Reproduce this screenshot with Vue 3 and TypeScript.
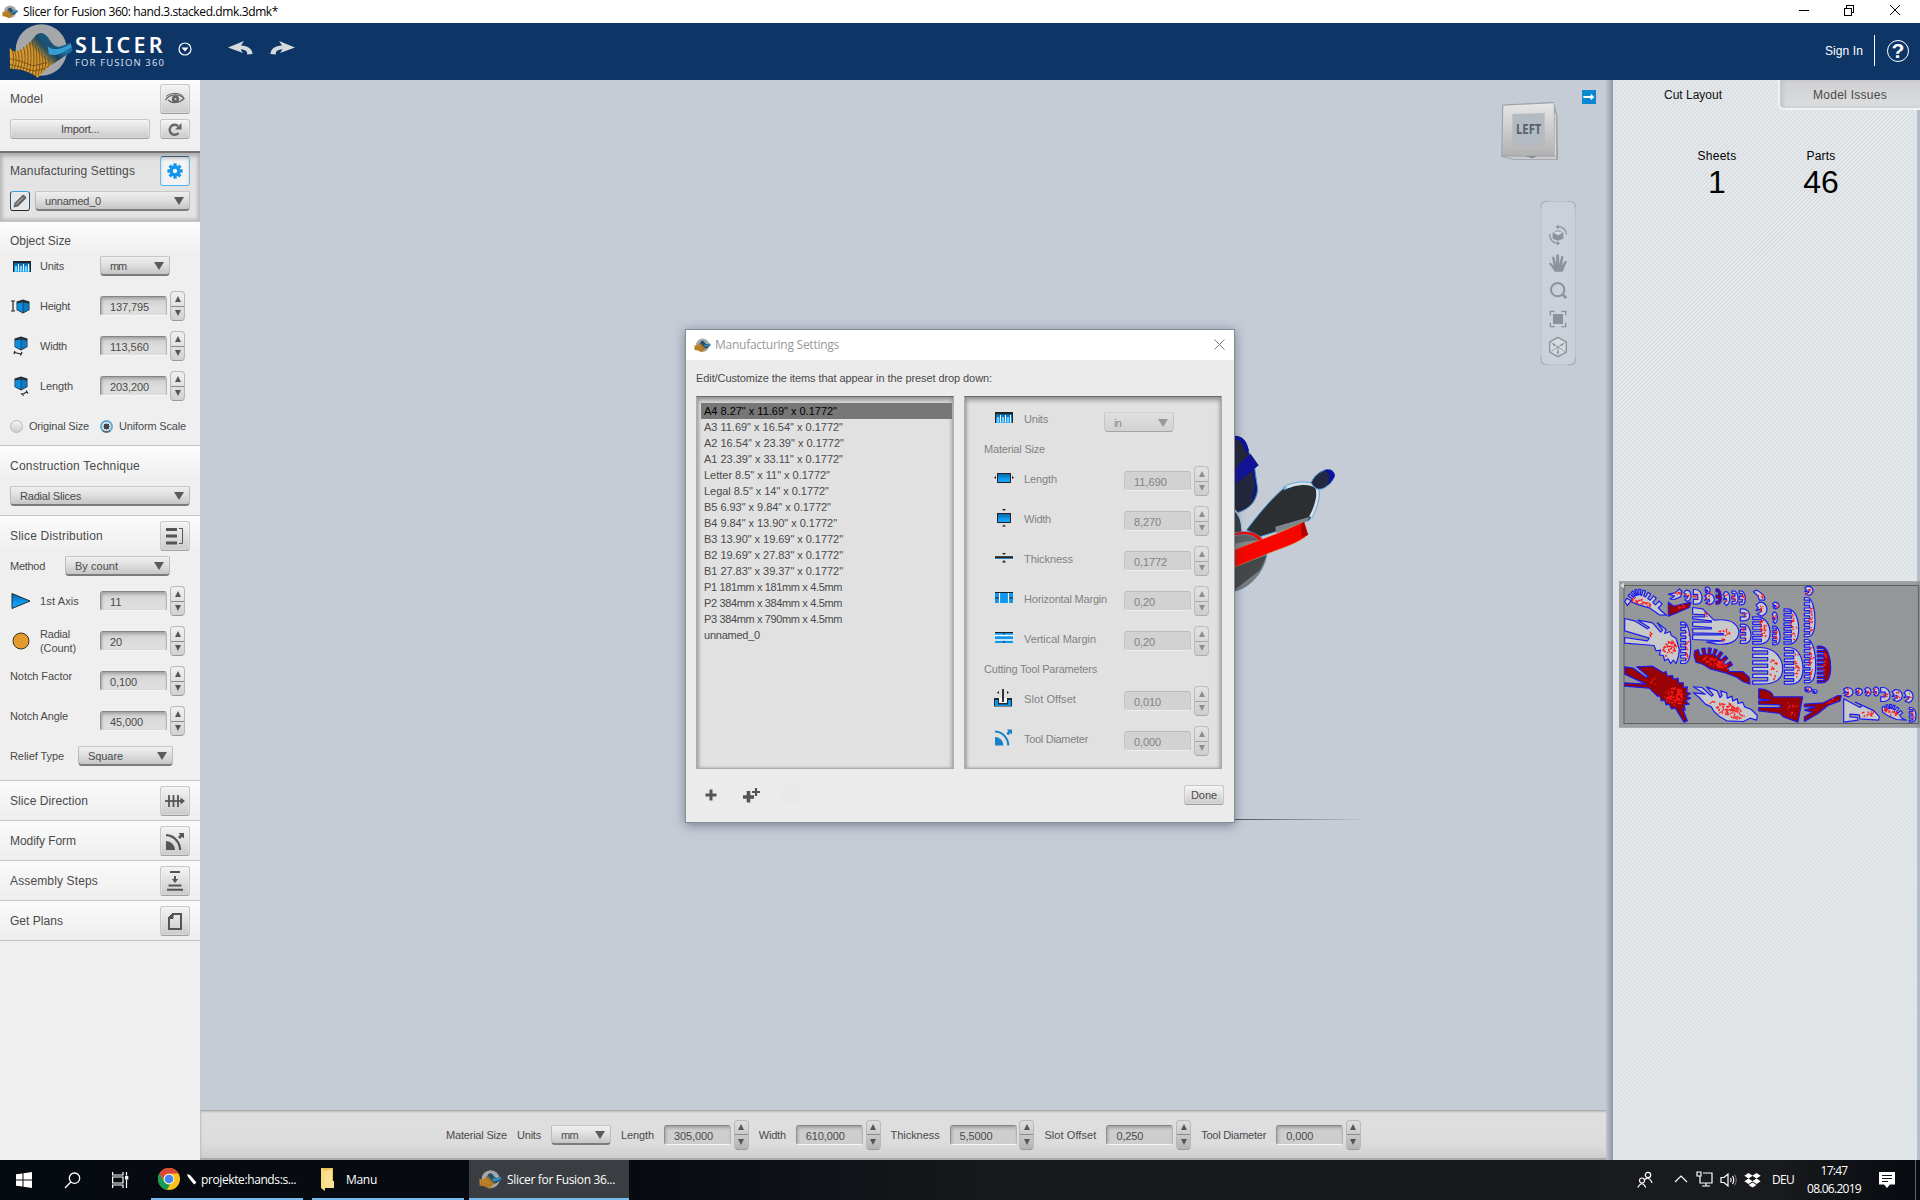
<script setup lang="ts">
type Pt = [number, number]

// Spreads letters so that a label takes exactly the given width in pixels.
const vFit = {
  mounted(el: HTMLElement, binding: { value: number }) {
    const n = (el.textContent ?? '').length
    const w = el.getBoundingClientRect().width
    if (n > 0 && w > 0) el.style.letterSpacing = `${(binding.value - w) / n}px`
  },
}

const numWidth = (s: string): number => [...s].reduce((a, c) => a + (c === ',' ? 3 : 6), 0)

const objectRows = [
  { icon: 'height', label: 'Height', w: 30, value: '137,795' },
  { icon: 'width', label: 'Width', w: 27, value: '113,560' },
  { icon: 'length', label: 'Length', w: 33, value: '203,200' },
]

const sliceRows = [
  { icon: 'axis', label: ['1st Axis'], w: [39], value: '11' },
  { icon: 'radial', label: ['Radial', '(Count)'], w: [30, 36], value: '20' },
  { icon: '', label: ['Notch Factor'], w: [62], value: '0,100' },
  { icon: '', label: ['Notch Angle'], w: [58], value: '45,000' },
]

const closed = [
  { label: 'Slice Direction', w: 78, icon: 'dir' },
  { label: 'Modify Form', w: 66, icon: 'form' },
  { label: 'Assembly Steps', w: 88, icon: 'steps' },
  { label: 'Get Plans', w: 53, icon: 'plans' },
]

const presets: [string, number][] = [
  ['A4 8.27" x 11.69" x 0.1772"', 133],
  ['A3 11.69" x 16.54" x 0.1772"', 139],
  ['A2 16.54" x 23.39" x 0.1772"', 140],
  ['A1 23.39" x 33.11" x 0.1772"', 139],
  ['Letter 8.5" x 11" x 0.1772"', 126],
  ['Legal 8.5" x 14" x 0.1772"', 125],
  ['B5 6.93" x 9.84" x 0.1772"', 127],
  ['B4 9.84" x 13.90" x 0.1772"', 133],
  ['B3 13.90" x 19.69" x 0.1772"', 139],
  ['B2 19.69" x 27.83" x 0.1772"', 139],
  ['B1 27.83" x 39.37" x 0.1772"', 139],
  ['P1 181mm x 181mm x 4.5mm', 138],
  ['P2 384mm x 384mm x 4.5mm', 138],
  ['P3 384mm x 790mm x 4.5mm', 138],
  ['unnamed_0', 56],
]

const materialRows = [
  { icon: 'len', label: 'Length', w: 33, value: '11,690' },
  { icon: 'wid', label: 'Width', w: 27, value: '8,270' },
  { icon: 'thick', label: 'Thickness', w: 49, value: '0,1772' },
  { icon: 'hm', label: 'Horizontal Margin', w: 83, value: '0,20' },
  { icon: 'vm', label: 'Vertical Margin', w: 72, value: '0,20' },
]
const toolRows = [
  { icon: 'slot', label: 'Slot Offset', w: 52, value: '0,010' },
  { icon: 'tool', label: 'Tool Diameter', w: 64, value: '0,000' },
]

const footerFields = [
  { label: 'Length', w: 33, value: '305,000' },
  { label: 'Width', w: 27, value: '610,000' },
  { label: 'Thickness', w: 49, value: '5,5000' },
  { label: 'Slot Offset', w: 52, value: '0,250' },
  { label: 'Tool Diameter', w: 65, value: '0,000' },
]

// ---- sheet preview geometry ----
interface Part { d: string; red?: boolean }

// Outline with square teeth along a quadratic curve, closed through the given points.
function fan(a: Pt, c: Pt, b: Pt, n: number, depth: number, rest: Pt[], red = false): Part {
  const pts: Pt[] = []
  const steps = n * 2
  const at = (t: number, off: number): Pt => {
    const u = 1 - t
    const x = u * u * a[0] + 2 * u * t * c[0] + t * t * b[0]
    const y = u * u * a[1] + 2 * u * t * c[1] + t * t * b[1]
    const dx = 2 * u * (c[0] - a[0]) + 2 * t * (b[0] - c[0])
    const dy = 2 * u * (c[1] - a[1]) + 2 * t * (b[1] - c[1])
    const l = Math.hypot(dx, dy) || 1
    return [x - (dy / l) * off, y + (dx / l) * off]
  }
  for (let i = 0; i < steps; i++) {
    const off = i % 2 ? depth : 0
    pts.push(at(i / steps, off), at((i + 1) / steps, off))
  }
  const all = [...pts, ...rest]
  return { d: 'M' + all.map(p => `${p[0].toFixed(1)} ${p[1].toFixed(1)}`).join('L') + 'Z', red }
}

// Flat on the left with n slots, round on the right.
function comb(x: number, y: number, w: number, h: number, n: number, red = false): Part {
  let d = `M${x + w * 0.25} ${y}`
  d += `C${x + w * 0.75} ${y} ${x + w} ${y + h * 0.3} ${x + w} ${y + h * 0.58}`
  d += `S${x + w * 0.75} ${y + h} ${x + w * 0.3} ${y + h}`
  const s = h / (n * 2 + 1)
  for (let i = n; i >= 1; i--) {
    const yb = y + s * (i * 2)
    d += `L${x} ${yb + s}L${x} ${yb}L${x + w * 0.5} ${yb}L${x + w * 0.5} ${yb - s}L${x} ${yb - s}`
  }
  return { d: d + `L${x} ${y}Z`, red }
}

// Small notched blob.
function blob(x: number, y: number, w: number, h: number, red = false): Part {
  return {
    d: `M${x} ${y + h * 0.2}L${x + w * 0.3} ${y}C${x + w} ${y} ${x + w * 1.1} ${y + h * 0.6} ${x + w * 0.8} ${y + h * 0.85}L${x + w * 0.5} ${y + h}L${x + w * 0.1} ${y + h * 0.85}L${x + w * 0.5} ${y + h * 0.65}L${x + w * 0.45} ${y + h * 0.5}L${x} ${y + h * 0.6}L${x + w * 0.2} ${y + h * 0.4}Z`,
    red,
  }
}

const parts: Part[] = [
  fan([46, 92], [80, 15], [166, 112], 9, 16, [[170, 135], [148, 134], [120, 114], [80, 102], [62, 94], [52, 106], [44, 94]]),
  { d: 'M175 72L196 68L208 56L216 64L212 80L192 88L180 86L194 78Z' },
  blob(222, 60, 22, 34), comb(250, 58, 26, 44, 1),
  blob(285, 50, 16, 20), blob(284, 70, 30, 34), comb(318, 56, 16, 46, 2, true),
  blob(340, 64, 20, 42), comb(366, 62, 18, 40, 2), comb(388, 62, 18, 42, 2),
  { d: 'M175 96L192 108L243 96L238 112L196 130L175 138Z', red: true },
  { d: 'M430 64L440 60C452 66 468 76 464 90L448 90L444 78Z' },
  blob(584, 48, 26, 28), blob(438, 96, 34, 42), blob(488, 96, 20, 20),
  comb(391, 116, 28, 36, 1), blob(487, 126, 16, 34),
  { d: 'M44 145L74 152L112 176L118 172L84 150L128 158L152 186L158 180L142 158L168 178L164 190L180 184L184 196L198 204L208 238L205 260L198 280L190 270L182 280L174 266L164 272L160 256L148 254L152 240L138 242L132 226L44 219L44 202L112 212L118 204L44 182Z' },
  comb(212, 156, 30, 124, 7),
  { d: 'M248 112L278 116L300 138L312 150C346 146 380 152 387 184C386 216 356 224 320 222L290 216L340 212L248 208L248 194L340 194L340 190L248 188L248 176L304 176L304 172L248 168L248 156L304 156L304 152L248 146L248 140L284 140L284 134L248 132Z' },
  comb(391, 162, 32, 58, 3), comb(428, 140, 52, 82, 5), comb(488, 168, 22, 56, 4),
  comb(522, 116, 44, 106, 7), comb(583, 82, 32, 118, 7),
  fan([254, 242], [330, 210], [374, 296], 7, 18, [[398, 304], [418, 322], [420, 342], [398, 334], [382, 322], [346, 308], [300, 296], [278, 282], [258, 276], [252, 256]], true),
  comb(428, 232, 90, 110, 5), comb(523, 232, 56, 110, 6), comb(583, 208, 34, 130, 8), comb(622, 228, 40, 110, 8, true),
  { d: 'M44 290L70 294L108 322L114 318L80 290L128 288L160 308L168 304L172 318L188 316L190 328L204 324L206 338L220 338L220 352L232 350L230 366L242 370L228 378L242 384L226 392L238 402L222 404L226 420L218 416L232 452L222 456L196 414L184 416L178 402L168 404L164 390L154 392L150 378L142 378L118 354L44 348L44 338L108 342L44 312Z', red: true },
  { d: 'M250 350L276 352L304 378L310 374L290 350L322 362L330 382L336 376L332 362L350 368L352 384L366 378L368 392L382 386L384 400L398 396L404 410L424 418L442 436L440 450L420 444L400 454L350 452L330 440L312 424L304 410L286 402L268 382L250 368L286 372Z' },
  { d: 'M446 356C470 356 488 366 490 380L578 380L564 456L520 440L510 430L446 422L446 412L510 412L510 404L446 402L446 392L480 390L446 386Z', red: true },
  blob(584, 350, 22, 16), blob(608, 358, 14, 12),
  { d: 'M583 402L640 398L684 376L694 376L690 392L654 406L624 430L583 454L583 440L606 426L583 420L616 410L583 410Z', red: true },
  blob(700, 352, 30, 28), blob(736, 354, 22, 22), blob(764, 352, 20, 26), blob(790, 350, 18, 28),
  comb(812, 352, 28, 42, 1), blob(846, 358, 32, 36), blob(882, 360, 28, 38), comb(898, 412, 20, 44, 3),
  { d: 'M701 386L750 412L756 406L736 396L792 422L808 440L806 450L750 446L748 434L720 432L720 440L742 442L744 450L701 456Z' },
  fan([816, 412], [850, 385], [884, 436], 6, 12, [[888, 450], [860, 448], [836, 438], [818, 426]]),
]

// Numbering marks, [cx, cy, rx, ry, count, rotation in degrees]
const clusters: number[][] = [
  [92, 96, 34, 7, 36, 16], [216, 108, 14, 6, 8, -10], [122, 190, 5, 8, 5, 0], [178, 236, 20, 26, 54, 30],
  [346, 188, 20, 10, 12, 0], [340, 210, 5, 6, 5, 0], [288, 132, 5, 6, 5, 0], [316, 278, 42, 11, 60, 22],
  [192, 378, 28, 28, 84, 30], [130, 334, 8, 8, 5, 0], [362, 424, 44, 20, 96, 18], [310, 396, 6, 8, 5, 0],
  [542, 406, 22, 8, 9, 0], [548, 432, 6, 8, 5, 0], [490, 296, 12, 34, 18, 0], [562, 284, 8, 38, 20, 0],
  [602, 280, 7, 50, 20, 0], [644, 280, 6, 44, 16, 0], [604, 140, 6, 46, 18, 0], [550, 166, 8, 42, 20, 0],
  [460, 176, 16, 28, 24, 0], [232, 220, 6, 48, 16, 0], [774, 432, 22, 8, 14, 0], [842, 426, 22, 8, 26, 22],
  [296, 84, 8, 22, 8, 0], [205, 70, 8, 8, 6, 0], [350, 84, 5, 12, 5, 0], [376, 84, 4, 12, 5, 0], [398, 84, 4, 12, 5, 0],
  [404, 188, 6, 20, 8, 0], [404, 132, 6, 8, 5, 0], [498, 196, 5, 20, 8, 0], [496, 142, 4, 10, 4, 0], [498, 106, 5, 5, 4, 0],
  [454, 116, 8, 10, 7, 0], [452, 76, 8, 6, 5, 30], [597, 62, 8, 8, 6, 0], [598, 358, 6, 4, 4, 0], [714, 366, 7, 8, 6, 0],
  [746, 364, 5, 8, 4, 0], [774, 366, 5, 8, 4, 0], [798, 364, 5, 8, 4, 0], [828, 374, 6, 12, 6, 0], [862, 374, 8, 10, 6, 0],
  [897, 378, 5, 10, 4, 0], [908, 434, 5, 14, 6, 0], [668, 392, 14, 5, 6, -20], [258, 78, 5, 10, 4, 0], [232, 76, 5, 8, 4, 0],
]
let seed = 7
const rnd = (): number => {
  seed = (seed * 16807) % 2147483647
  return seed / 2147483647
}
const marks = clusters
  .map(([cx, cy, rx, ry, n, rot]) => {
    const r = (rot * Math.PI) / 180
    let d = ''
    for (let i = 0; i < n; i++) {
      const a = rnd() * Math.PI * 2
      const q = Math.sqrt(rnd())
      const ex = Math.cos(a) * q * rx
      const ey = Math.sin(a) * q * ry
      const x = cx + ex * Math.cos(r) - ey * Math.sin(r)
      const y = cy + ex * Math.sin(r) + ey * Math.cos(r)
      d += `M${x.toFixed(1)} ${y.toFixed(1)}l${(rnd() * 8 - 4).toFixed(1)} ${(rnd() * 8 - 4).toFixed(1)}l${(rnd() * 6 - 3).toFixed(1)} ${(rnd() * 6 - 3).toFixed(1)}`
    }
    return d
  })
  .join('')

// Vertical ribs of the logo: [x at the top, top y, bottom y]
const logoSlices: number[][] = [
  [34, 148, 206], [42, 154, 208], [51, 152, 208], [60, 148, 210], [69, 141, 212], [78, 133, 216], [87, 126, 222],
  [96, 124, 230], [105, 134, 232], [114, 146, 228], [123, 158, 220], [132, 168, 212], [142, 174, 204],
]
const rulerTicks = [3.5, 6, 8.5, 11, 13.5, 16]
</script>

<template>
  <div class="app">
    <svg class="defs" width="0" height="0">
      <defs>
        <linearGradient id="wave" gradientUnits="userSpaceOnUse" x1="60" x2="150" y1="200" y2="110">
          <stop offset="0" stop-color="#dd9c31" /><stop offset=".5" stop-color="#cf9230" />
          <stop offset=".66" stop-color="#4a5a52" /><stop offset=".78" stop-color="#17405c" /><stop offset="1" stop-color="#1f6f9f" />
        </linearGradient>
        <linearGradient id="blue" x1="0" x2="0" y1="0" y2="1">
          <stop offset="0" stop-color="#0b5f9c" /><stop offset=".6" stop-color="#0c9bf2" /><stop offset="1" stop-color="#1aa5f8" />
        </linearGradient>
        <linearGradient id="cube" x1="0" x2="0" y1="0" y2="1">
          <stop offset="0" stop-color="#e6e6e6" /><stop offset="1" stop-color="#b2b2b2" />
        </linearGradient>
        <symbol id="logo" viewBox="22 68 200 170">
          <circle cx="123" cy="150" r="78" fill="#a5a7a9" />
          <path d="M27 143C34 150 38 156 48 154C72 150 88 126 104 108C116 94 130 96 142 110C154 128 164 146 184 138L212 128L218 152L160 192L142 204L112 234L96 222L62 210L28 206Z" fill="url(#wave)" />
          <path d="M106 112C116 96 130 96 142 114C152 132 166 146 188 140L212 130L216 144C186 160 162 160 146 152C128 142 124 116 106 112Z" fill="#1a5577" opacity=".8" />
          <path d="M142 138C160 156 186 146 212 131L215 142C190 156 166 172 146 162Z" fill="#38a6df" opacity=".9" />
          <path v-for="s in logoSlices" :key="s[0]" :d="`M${s[0]} ${s[1]}Q${s[0] + 10} ${(s[1] + s[2]) / 2} ${s[0] - 1} ${s[2]}`" fill="none" stroke="#4a330b" stroke-width="2.200" opacity=".85" />
          <path d="M28 176L60 184L98 198L142 188M28 194L62 202L100 214L132 206" fill="none" stroke="#5a3c0a" stroke-width="2" />
        </symbol>
        <symbol id="ruler" viewBox="0 0 18 11">
          <rect width="18" height="11" fill="#222" /><rect x="1" y="2" width="16" height="9" fill="url(#blue)" />
          <path v-for="(t, i) in rulerTicks" :key="t" :d="`M${t - 0.5} 10.500V${i % 2 ? 3 : 5}`" stroke="#fff" stroke-width="1" />
        </symbol>
        <symbol id="box" viewBox="0 0 14 15">
          <path d="M7 .5L13.5 2.500V11L7 14.500L.5 11V2.500Z" fill="#262f36" /><path d="M1.200 4.500L6.700 3.500V13.500L1.200 10.600Z" fill="#0b8ee0" /><path d="M12.800 4.500L7.400 3.500V13.500L12.800 10.600Z" fill="#0b7cc6" />
        </symbol>
        <symbol id="arcform" viewBox="0 0 18 17">
          <path d="M0 8A9 9 0 0 1 9 17H0Z" /><path d="M0 2.2A14.6 14.6 0 0 1 14 17" fill="none" stroke="currentColor" stroke-width="2.2" />
          <path d="M12.5 0H18V5.5L16.2 3.8L14 6L12 4L14.2 1.8Z" />
        </symbol>
      </defs>
    </svg>

    <header class="titlebar">
      <svg class="tb-logo" width="16" height="14"><use href="#logo" /></svg>
      <span v-fit="255">Slicer for Fusion 360: hand.3.stacked.dmk.3dmk*</span>
      <svg class="wincontrols" width="110" height="23" viewBox="0 0 110 23" fill="none" stroke="#000" stroke-width="1" shape-rendering="crispEdges">
        <path d="M3 10.5H13M48.500 8.500H55.500V15.500H48.500ZM50.500 8V5.500H57.500V12.500H56" />
        <path d="M94 5L104 15M104 5L94 15" shape-rendering="auto" />
      </svg>
    </header>

    <header class="brand">
      <svg class="brand-logo" width="66" height="56"><use href="#logo" /></svg>
      <div class="brand-name"><b v-fit="91">SLICER</b><span v-fit="90">FOR FUSION 360</span></div>
      <svg class="brand-menu" width="14" height="14" viewBox="0 0 14 14"><circle cx="7" cy="7" r="6" fill="none" stroke="#fff" stroke-width="1.2" /><path d="M3.500 5.500H10.500L7 9.500Z" fill="#fff" /></svg>
      <svg class="undo" width="25" height="15" viewBox="0 0 25 15"><path d="M0 6.500L16 0L13 4.500C20 5 24.500 8 24.500 13L19 13.500C20 10 17 8.500 12.500 8.500L15 12Z" fill="#d6dadf" /></svg>
      <svg class="redo" width="25" height="15" viewBox="0 0 25 15"><path d="M25 6.500L9 0L12 4.500C5 5 .5 8 .5 13L6 13.500C5 10 8 8.500 12.500 8.500L10 12Z" fill="#d6dadf" /></svg>
      <span class="signin"><span v-fit="38">Sign In</span></span>
      <i class="vline"></i>
      <span class="help">?</span>
    </header>

    <main class="main">
      <aside class="side">
        <section class="sec model">
          <div class="line l1"><h2 v-fit="33">Model</h2>
            <div class="btn sq"><svg width="20" height="14" viewBox="0 0 20 14" fill="none" stroke="#666"><path d="M.5 8C5 1.500 14 1.500 19 6.500C15 11 7 12 3 8" stroke-width="1.300" /><path d="M1 4.500C6 .3 14 .3 18.500 4.500" stroke-width="1" /><circle cx="10.500" cy="7" r="3.300" fill="#666" /><circle cx="10.500" cy="7" r="1" fill="#ddd" stroke="none" /></svg></div></div>
          <div class="line l2"><div class="btn import"><span v-fit="38">Import...</span></div>
            <div class="btn re"><svg width="14" height="13" viewBox="0 0 14 13"><path d="M10.500 10A5 5 0 1 1 10 3" fill="none" stroke="#666" stroke-width="2.400" /><path d="M13.500 0V6.500H7Z" fill="#666" /></svg></div></div>
        </section>
        <section class="sec manuf">
          <div class="line l1"><h2 v-fit="125">Manufacturing Settings</h2>
            <div class="btn sq on"><svg width="16" height="16" viewBox="-8 -8 16 16"><g fill="#1195ea"><rect v-for="a in 8" :key="a" x="-1.700" y="-7.600" width="3.400" height="5" :transform="`rotate(${a * 45})`" /><circle r="5.400" /></g><circle r="2.200" fill="#f2f2f2" /></svg></div></div>
          <div class="line l2"><div class="btn pencil"><svg width="14" height="14" viewBox="0 0 14 14"><path d="M.5 13.500L1.500 9L9.500 1C10.500 0 14 3 13 4.500L5 12.500Z" fill="#666" /><path d="M3 10.500L10 3.500" stroke="#ccc" stroke-width="1" /></svg></div>
            <div class="sel" style="width: 155px"><span v-fit="56">unnamed_0</span><i></i></div></div>
        </section>
        <section class="sec objsize">
          <h2 v-fit="61">Object Size</h2>
          <div class="row units"><div class="ic"><svg width="18" height="11"><use href="#ruler" /></svg></div><div class="lb"><span v-fit="24">Units</span></div><div class="sel" style="width: 70px"><span v-fit="16">mm</span><i></i></div></div>
          <div v-for="r in objectRows" :key="r.label" class="row">
            <div class="ic">
              <svg v-if="r.icon === 'height'" width="20" height="16" viewBox="0 0 20 16"><path d="M0 3H4M2 3V13M0 13H4" stroke="#222" stroke-width="1.200" /><use href="#box" x="5" y="1" width="14" height="15" /></svg>
              <svg v-else-if="r.icon === 'width'" width="20" height="20" viewBox="0 0 20 20"><use href="#box" x="3" y="0" width="14" height="15" /><path d="M4 15L3 18M3.500 16.500L10 18M11 16L9.500 19.500" stroke="#222" stroke-width="1.200" fill="none" /></svg>
              <svg v-else width="20" height="20" viewBox="0 0 20 20"><use href="#box" x="3" y="0" width="14" height="15" /><path d="M10 17.500L13 19.500M11 18.500L16 16M15 14.500L17 17.500" stroke="#222" stroke-width="1.200" fill="none" /></svg>
            </div>
            <div class="lb"><span v-fit="r.w">{{ r.label }}</span></div>
            <div class="num"><span v-fit="numWidth(r.value)">{{ r.value }}</span></div><div class="spin"><i></i><i></i></div>
          </div>
          <div class="radios"><i class="radio"></i><span v-fit="60">Original Size</span><i class="radio sel-on"></i><span v-fit="67">Uniform Scale</span></div>
        </section>
        <section class="sec constr">
          <h2 v-fit="130">Construction Technique</h2>
          <div class="sel" style="width: 180px"><span v-fit="61">Radial Slices</span><i></i></div>
        </section>
        <section class="sec dist">
          <div class="line l1"><h2 v-fit="93">Slice Distribution</h2>
            <div class="btn sq"><svg width="18" height="18" viewBox="0 0 18 18"><path d="M0 2.500H11M0 9H11M0 16H11" stroke="#555" stroke-width="3" /><path d="M13 1.500H16.500V16.500H13" fill="none" stroke="#555" /></svg></div></div>
          <div class="line method"><span v-fit="35">Method</span><div class="sel" style="width: 105px"><span v-fit="43">By count</span><i></i></div></div>
          <div v-for="r in sliceRows" :key="r.value" class="row" :class="{ plain: !r.icon }">
            <div v-if="r.icon" class="ic">
              <svg v-if="r.icon === 'axis'" width="20" height="16" viewBox="0 0 20 16"><path d="M1 .5L19 8L1 15.500Z" fill="url(#blue)" stroke="#1d2a33" stroke-width="1" /></svg>
              <svg v-else width="20" height="18" viewBox="0 0 20 18"><circle cx="10" cy="9" r="8" fill="#e39b2d" stroke="#3c342a" stroke-width="1" /></svg>
            </div>
            <div class="lb"><span v-for="(t, i) in r.label" :key="t" v-fit="r.w[i]">{{ t }}</span></div>
            <div class="num"><span v-fit="numWidth(r.value)">{{ r.value }}</span></div><div class="spin"><i></i><i></i></div>
          </div>
          <div class="line relief"><span v-fit="54">Relief Type</span><div class="sel" style="width: 95px"><span v-fit="35">Square</span><i></i></div></div>
        </section>
        <section v-for="c in closed" :key="c.label" class="sec closed">
          <h2 v-fit="c.w">{{ c.label }}</h2>
          <div class="btn sq">
            <svg v-if="c.icon === 'dir'" width="20" height="14" viewBox="0 0 20 14"><path d="M0 7H16" stroke="#555" stroke-width="1.800" /><path d="M15.500 3.500L20 7L15.500 10.500Z" fill="#555" /><path d="M4 1V13M8.500 1V13M13 1V13" stroke="#555" stroke-width="1.800" /></svg>
            <svg v-else-if="c.icon === 'form'" class="grey" width="18" height="17"><use href="#arcform" /></svg>
            <svg v-else-if="c.icon === 'steps'" width="16" height="20" viewBox="0 0 16 20"><path d="M3 1H13M1.500 14.500H14.500M0 18.700H16" stroke="#555" stroke-width="2" /><path d="M8 5V9" stroke="#555" stroke-width="2" /><path d="M4.800 8H11.200L8 12Z" fill="#555" /></svg>
            <svg v-else width="14" height="17" viewBox="0 0 14 17"><path d="M5.500 1H13V16H1V5.500Z" fill="none" stroke="#555" stroke-width="2" /><path d="M0 5L5 0V5.500H0Z" fill="#555" stroke="#555" /></svg>
          </div>
        </section>
      </aside>

      <section class="stage">
        <div class="scene">
          <svg class="hand" width="110" height="170" viewBox="852 330 330 510">
            <path d="M852 350C872 346 890 362 894 390L912 430L923 510C918 550 892 572 852 580Z" fill="#23263c" stroke="#3d8ac6" stroke-width="3" />
            <path d="M852 347C876 346 890 360 897 392L888 400C884 372 870 358 852 356Z" fill="#0a10a0" />
            <path d="M852 450L888 412L902 402L926 436L880 474L852 494Z" fill="#121396" /><path d="M908 450L918 500L908 536" fill="none" stroke="#0a10a0" stroke-width="5" />
            <path d="M852 568C868 582 878 606 876 640H852Z" fill="#3a3f44" stroke="#a9cbe3" stroke-width="5" />
            <path d="M890 630C920 590 960 540 1000 506C1040 484 1080 486 1100 500C1112 520 1104 560 1078 600L980 634L930 650Z" fill="#2b2f31" stroke="#3d8ac6" stroke-width="3" />
            <path d="M1000 506C1040 484 1080 486 1100 500C1110 520 1102 556 1082 592" fill="none" stroke="#6fb0de" stroke-width="11" />
            <path d="M1010 502C1040 488 1080 486 1099 502C1108 520 1100 556 1082 590" fill="none" stroke="#dfe2e3" stroke-width="7" />
            <path d="M1084 488C1094 462 1120 446 1144 450C1160 464 1152 484 1128 500C1112 512 1094 510 1084 488Z" fill="#232741" stroke="#3d8ac6" stroke-width="3" />
            <path d="M1122 450C1140 444 1158 456 1154 470L1136 494L1138 464Z" fill="#0a129e" />
            <path d="M852 740L950 704C940 756 902 802 852 814Z" fill="#45484a" stroke="#3d8ac6" stroke-width="2.500" />
            <path d="M858 806L930 750L946 716L950 706C942 760 900 800 858 812Z" fill="#777b7e" />
            <path d="M852 650C880 632 916 640 928 664L852 690Z" fill="#5d6164" />
            <path d="M852 640C890 628 920 636 938 658L928 664C910 642 884 640 852 648Z" fill="#ee0a0a" stroke="#58a0cf" stroke-width="1.500" />
            <path d="M852 672C900 662 930 658 936 666L852 694Z" fill="#85898c" />
            <path d="M976 620L1080 590L1072 602L978 640Z" fill="#7f868c" />
            <path d="M852 690L978 642L1062 606L1074 644C1034 676 1000 680 946 704L852 742Z" fill="#f70500" stroke="#d37a20" stroke-width="1.500" /><path d="M1062 606L1074 644L1056 652L1052 612Z" fill="#b10000" />
          </svg>
          <i class="floorline"></i>
          <svg class="nav" width="120" height="300" viewBox="0 240 360 900">
            <rect x="306" y="270" width="42" height="42" fill="#0c87d2" /><path d="M310 291H334" stroke="#fff" stroke-width="6" /><path d="M332 281L343 291L332 301Z" fill="#fff" />
            <path d="M68 315L220 307L231 345L233 478L100 478L65 469Z" fill="#a6a9ad" stroke="#90959b" stroke-width="2" />
            <path d="M70 317L221 310L224 466L67 466Z" fill="url(#cube)" /><path d="M72 470L226 470L230 477L102 477Z" fill="#c9cacc" />
            <path d="M134 469L170 469L158 474Z" fill="#747e8b" /><path d="M226 340V470" stroke="#e0e1e3" stroke-width="3" />
            <path d="M97 342L194 339V437H97Z" fill="#b4bac1" />
            <text x="108" y="403" font-family="Open Sans, sans-serif" font-weight="700" font-size="43" textLength="76" lengthAdjust="spacingAndGlyphs" fill="#555f6d">LEFT</text>
            <rect x="183" y="604" width="103" height="490" rx="18" fill="#cbd1d9" stroke="#b9c0cb" stroke-width="3" />
            <path d="M183 626V620Q183 604 200 604H204M264 604H270Q286 604 286 620V626M183 1072V1078Q183 1094 200 1094H204M264 1094H270Q286 1094 286 1078V1072" fill="none" stroke="#aab1bc" stroke-width="4" />
            <g fill="#8d939b" stroke="#8d939b">
              <path d="M218 698L234 690L250 698V716L234 722L218 716Z" stroke="none" /><path d="M220 698L234 694L248 698L234 706Z" fill="#d6dade" stroke="none" />
              <path d="M232 680C250 680 260 690 259 704M236 730C218 730 208 718 209 702" fill="none" stroke-width="4" /><path d="M236 674L226 681L236 688ZM232 723L240 730L232 737Z" stroke="none" />
              <path d="M224 815C216 802 212 798 207 790Q210 786 216 792L221 797L216 772Q219 767 223 772L228 792L229 765Q234 760 237 765L238 792L244 768Q249 766 250 771L246 796L255 783Q260 781 260 786L248 815Z" stroke="none" />
              <circle cx="233" cy="869" r="20" fill="none" stroke-width="6" /><path d="M246 882L259 894" stroke-width="8" />
              <rect x="219" y="942" width="30" height="30" stroke="none" /><path d="M211 946V934H224M244 934H257V946M257 968V980H244M224 980H211V968" fill="none" stroke-width="4" />
              <path d="M234 1012L259 1026V1056L234 1070L209 1056V1026Z" fill="#d7dbe1" stroke-width="4" /><path d="M214 1028L254 1054M254 1028L214 1054M234 1040V1064" stroke-width="2.500" /><circle cx="234" cy="1057" r="3" /><circle cx="222" cy="1034" r="3" /><circle cx="246" cy="1034" r="3" />
            </g>
          </svg>
        </div>
        <footer class="matbar">
          <span v-fit="61">Material Size</span><span class="u" v-fit="24">Units</span>
          <div class="sel" style="width: 60px"><span v-fit="17">mm</span><i></i></div>
          <template v-for="f in footerFields" :key="f.label">
            <span class="fl" v-fit="f.w">{{ f.label }}</span>
            <div class="num"><span v-fit="numWidth(f.value)">{{ f.value }}</span></div><div class="spin"><i></i><i></i></div>
          </template>
        </footer>
      </section>

      <aside class="panel">
        <nav class="tabs"><div class="tab"><span v-fit="58">Cut Layout</span></div><div class="tab idle"><span v-fit="74">Model Issues</span></div></nav>
        <div class="counts">
          <div><span v-fit="39">Sheets</span><strong>1</strong></div>
          <div><span v-fit="29">Parts</span><strong>46</strong></div>
        </div>
        <svg class="sheet" width="301" height="147" viewBox="27 33 903 440">
          <rect x="27" y="33" width="903" height="440" fill="#8a8c8e" fill-opacity=".8" />
          <rect x="42" y="46" width="884" height="414" fill="#8f9192" fill-opacity=".45" stroke="#5d5f61" stroke-width="3" />
          <path d="M30 46L42 38V54Z" fill="#d6d8da" />
          <g stroke="#1c1cf0" stroke-width="3.600" stroke-linejoin="round"><path v-for="(p, i) in parts" :key="i" :d="p.d" :fill="p.red ? '#980202' : '#c8c9cb'" /></g>
          <path :d="marks" fill="none" stroke="#ff1a1a" stroke-width="3.400" />
        </svg>
      </aside>
    </main>

    <section class="dialog">
      <header><svg width="17" height="15"><use href="#logo" /></svg><span v-fit="124">Manufacturing Settings</span>
        <svg class="x" width="11" height="11" viewBox="0 0 11 11"><path d="M.5 .5L10.500 10.500M10.500 .5L.5 10.500" stroke="#777" fill="none" /></svg></header>
      <p><span v-fit="296">Edit/Customize the items that appear in the preset drop down:</span></p>
      <div class="cols">
        <ul class="inset list"><li v-for="(p, i) in presets" :key="p[0]" :class="{ hot: i === 0 }"><span v-fit="p[1]">{{ p[0] }}</span></li></ul>
        <div class="inset form">
          <div class="frow first"><div class="fi"><svg width="18" height="11"><use href="#ruler" /></svg></div><div class="fl"><span v-fit="24">Units</span></div><div class="sel dim" style="width: 70px"><span v-fit="7">in</span><i></i></div></div>
          <h3><span v-fit="61">Material Size</span></h3>
          <div v-for="r in materialRows" :key="r.label" class="frow">
            <div class="fi">
              <svg width="20" height="20" viewBox="0 0 20 20">
                <template v-if="r.icon === 'len'"><rect x="3.500" y="5.500" width="13" height="9" fill="url(#blue)" stroke="#222" /><path d="M0 9.500L2 8V11ZM20 9.500L18 8V11Z" fill="#222" /></template>
                <template v-else-if="r.icon === 'wid'"><rect x="3.500" y="5.500" width="13" height="9" fill="url(#blue)" stroke="#222" /><path d="M10 3L8 1H12ZM10 16.500L8 18.500H12Z" fill="#222" /></template>
                <template v-else-if="r.icon === 'thick'"><path d="M1 9.200H19" stroke="#222" stroke-width="2" /><path d="M1 10.500H19" stroke="#2f86bd" /><path d="M10 7L8 5H12ZM10 12L8 14.500H12Z" fill="#222" /></template>
                <template v-else-if="r.icon === 'hm'"><rect x="1" y="4" width="18" height="11" fill="#0f97ee" /><path d="M1 4.500H19M1 10H5M15 10H19" stroke="#222" /><path d="M5.500 5V15M14.500 5V15" stroke="#fff" stroke-width="1.200" /></template>
                <template v-else><rect x="1" y="4" width="18" height="11" fill="#0f97ee" /><path d="M1 4.500H19M10 4V7M10 12V15" stroke="#222" /><path d="M1 7.500H19M1 12H19" stroke="#fff" stroke-width="1.300" /></template>
              </svg>
            </div>
            <div class="fl"><span v-fit="r.w">{{ r.label }}</span></div>
            <div class="num dim"><span v-fit="numWidth(r.value)">{{ r.value }}</span></div><div class="spin dim"><i></i><i></i></div>
          </div>
          <h3><span v-fit="113">Cutting Tool Parameters</span></h3>
          <div v-for="r in toolRows" :key="r.label" class="frow">
            <div class="fi">
              <svg v-if="r.icon === 'slot'" width="18" height="18" viewBox="0 0 18 18"><path d="M0 9H5V14H13V9H18V17.500H0Z" fill="#1f2a33" /><path d="M1 11H4V15.500H14V11H17V17H1Z" fill="#1095ea" /><path d="M5 2L3 3.500L5 5ZM13 2L15 3.500L13 5Z" fill="#222" /><rect x="5.500" y="9" width="7" height="5" fill="#fff" opacity=".85" /><path d="M9 0V13" stroke="#222" stroke-width="1.800" /></svg>
              <svg v-else class="bluefill" width="17" height="17"><use href="#arcform" /></svg>
            </div>
            <div class="fl"><span v-fit="r.w">{{ r.label }}</span></div>
            <div class="num dim"><span v-fit="numWidth(r.value)">{{ r.value }}</span></div><div class="spin dim"><i></i><i></i></div>
          </div>
        </div>
      </div>
      <div class="actions">
        <svg width="110" height="20" viewBox="0 0 110 20"><path d="M9.500 10H20.500M15 4.500V15.500" stroke="#555" stroke-width="3" /><path d="M47 12H58M52.500 6V17.500" stroke="#555" stroke-width="3.600" /><path d="M56 7H64M60 3V11" stroke="#555" stroke-width="2.200" /><rect x="85.500" y=".5" width="19" height="19" rx="2" fill="#e9e9e9" /><path d="M91 10H99" stroke="#ededed" stroke-width="2" /></svg>
        <div class="btn done"><span v-fit="26">Done</span></div>
      </div>
    </section>

    <footer class="taskbar">
      <div class="tk start"><svg width="16" height="16" viewBox="0 0 16 16"><path d="M0 2.300L6.500 1.400V7.500H0ZM7.500 1.200L16 0V7.500H7.500ZM0 8.500H6.500V14.600L0 13.700ZM7.500 8.500H16V16L7.500 14.800Z" fill="#fff" /></svg></div>
      <div class="tk"><svg width="17" height="17" viewBox="0 0 17 17" fill="none" stroke="#fff" stroke-width="1.300"><circle cx="10.500" cy="6.200" r="5.200" /><path d="M6.800 10L1 16" /></svg></div>
      <div class="tk"><svg width="17" height="16" viewBox="0 0 17 16" fill="none" stroke="#fff" stroke-width="1.200"><path d="M.6 0V3H11V0M.6 16V13H11V16M.6 5H11V11H.6ZM14.500 0V3.500M14.500 8V16" /><rect x="13.700" y="4.500" width="2" height="2.500" fill="#fff" /></svg></div>
      <div class="task chrome"><svg width="22" height="22" viewBox="-11 -11 22 22"><circle r="11" fill="#fbc116" /><path d="M-9.500 -5.500A11 11 0 0 1 9.500 -5.500H0A5.500 5.500 0 0 0 -4.800 2.700Z" fill="#db4437" /><path d="M-9.500 -5.500L-4.800 2.700A5.500 5.500 0 0 0 1 5.400L-2 10.800A11 11 0 0 1 -9.500 -5.500Z" fill="#0f9d58" /><circle r="5.300" fill="#f1f1f1" /><circle r="4.300" fill="#4285f4" /></svg>
        <svg class="pen" width="10" height="11" viewBox="0 0 10 11"><path d="M0 0L3 1L9.500 8.500L7 10.500L1 3Z" fill="#fff" /></svg><span v-fit="95">projekte:hands:s...</span></div>
      <div class="task folder"><svg width="16" height="24" viewBox="0 0 16 24"><path d="M1 1H13V20H1Z" fill="#e9c35a" /><path d="M1 1L5 4V24L1 21Z" fill="#f8dc82" /><path d="M5 4L12 2V14H14V21H5Z" fill="#fbe092" /></svg><span v-fit="31">Manu</span></div>
      <div class="task active"><svg width="23" height="21"><use href="#logo" /></svg><span v-fit="108">Slicer for Fusion 36...</span></div>
      <div class="tray">
        <svg width="80" height="20" viewBox="0 0 80 20" fill="none" stroke="#fff" stroke-width="1.200"><circle cx="11" cy="5" r="2.700" /><path d="M7.500 10Q11 5.500 14.800 12M14.800 12V13" /><circle cx="5" cy="10.500" r="2.500" /><path d="M.8 17.500Q5 10 8.800 17.500" /><path d="M38 12L44 6L50 12" /><path d="M63 7V14H75V4H66M69 14V17M65 17H73" transform="translate(0 -1)" /><path d="M60 2H64V6H60Z" /></svg>
        <svg class="t2" width="64" height="20" viewBox="0 0 64 20" fill="none" stroke="#fff"><path d="M1 7.500H4L8 4V16L4 12.500H1Z" stroke-width="1.200" /><path d="M10.500 8Q12 10 10.500 12M12.500 6Q15 10 12.500 14" stroke-width="1.200" /><path d="M14.500 4.500Q18 10 14.500 15.500" stroke="#777" /><g fill="#fff" stroke="none"><path d="M28.500 3L32.700 5.700L28.500 8.400L24.300 5.700ZM36.500 3L40.700 5.700L36.500 8.400L32.300 5.700ZM28.500 8.600L32.700 11.300L28.500 14L24.300 11.300ZM36.500 8.600L40.700 11.300L36.500 14L32.300 11.300ZM32.500 12.500L36.500 15L32.500 17.500L28.500 15Z" /></g></svg>
        <span class="deu" v-fit="22">DEU</span>
        <div class="clock"><span v-fit="27">17:47</span><span v-fit="54">08.06.2019</span></div>
        <svg class="note" width="16" height="17" viewBox="0 0 16 17"><path d="M0 0H16V12.500H11L8 16L5 12.500H0Z" fill="#fff" /><path d="M3 3.500H13M3 6.500H13M3 9.500H9" stroke="#111" /></svg>
        <i class="edge"></i>
      </div>
    </footer>
  </div>
</template>

<style>
html, body { margin: 0; overflow: hidden; }
</style>

<style scoped>
.app { position: relative; width: 1920px; height: 1200px; display: flex; flex-direction: column; overflow: hidden; font: 11px/14px "Liberation Sans", Arial, sans-serif; color: #4a4a4a; background: #c5ccd6; }
.app * { box-sizing: border-box; }
.defs { position: absolute; }
svg { display: block; flex: none; }
span, h2, b, strong { white-space: nowrap; }
span { display: inline-block; flex: none; }
h2 { margin: 0; font-size: 12px; line-height: 14px; font-weight: 400; flex: none; width: max-content; }

.titlebar { height: 23px; background: #fff; display: flex; align-items: center; padding-left: 2px; color: #000; font: 12px/16px "Open Sans", sans-serif; flex: none; }
.tb-logo { margin-right: 5px; }
.titlebar span { margin-top: 1px; }
.wincontrols { margin-left: auto; margin-right: 14px; }

.brand { height: 57px; background: #0d3566; display: flex; align-items: flex-start; color: #fff; flex: none; }
.brand-logo { margin: 0 0 0 8px; }
.brand-name { display: flex; flex-direction: column; align-items: flex-start; margin: 10px 0 0 1px; font-family: "Noto Sans", sans-serif; width: 103px; }
.brand-name b { font-size: 21.5px; line-height: 23px; font-weight: 600; display: inline-block; }
.brand-name span { font-size: 9.5px; line-height: 12px; color: #d5deea; margin-top: 1px; }
.brand-menu { margin-top: 19px; }
.undo { margin: 18px 0 0 36px; }
.redo { margin: 18px 0 0 17px; }
.signin { margin: 21px 11px 0 auto; font-size: 12px; }
.vline { width: 1px; height: 31px; background: #fff; margin-top: 12px; }
.help { width: 22px; height: 22px; border: 1px solid #fff; border-radius: 50%; margin: 17px 11px 0 12px; text-align: center; font-size: 21px; line-height: 20px; font-weight: 700; }

.main { flex: 1; display: flex; min-height: 0; }
.side { width: 200px; flex: none; background: #efefef; }
.sec { border-top: 1px solid #c6c6c6; background: linear-gradient(#fcfcfc, #efefef 34px); padding: 0 10px; }
.line { display: flex; align-items: center; }
.l1 { justify-content: space-between; }
.btn { display: flex; align-items: center; justify-content: center; border: 1px solid #c6c6c6; border-bottom-color: #9f9f9f; border-radius: 3px; background: linear-gradient(#f4f4f4, #cbcbcb); box-shadow: inset 0 0 0 1px rgba(255, 255, 255, .25); }
.sq { width: 30px; height: 30px; }
.btn.on { border-color: #375c78 #6db9e8 #4fb4f2; background: #f3f3f3; box-shadow: inset 0 2px 3px #c8c8c8; }
.model { height: 71px; border-top: 0; padding-top: 4px; }
.model .l2 { margin-top: 5px; justify-content: space-between; }
.import { width: 140px; height: 20px; }
.re { width: 30px; height: 20px; }
.manuf { height: 70px; background: #e3e3e3; border-top: 2px solid #747474; padding-top: 3px; box-shadow: inset 0 3px 5px #aaa, inset 2px 0 4px #c4c4c4, inset -2px 0 4px #c4c4c4, inset 0 -2px 3px #c4c4c4; }
.manuf .l2 { margin-top: 5px; justify-content: space-between; }
.pencil { width: 20px; height: 20px; border-color: #3aa3e6 #244f70 #222; background: #e6e6e6; }
.sel { position: relative; height: 20px; flex: none; display: flex; align-items: center; border: 1px solid #bcbcbc; border-top-color: transparent; border-bottom: 2px solid #7b7b7b; border-radius: 1px 1px 4px 4px; background: linear-gradient(#efefef, #e2e2e2 40%, #c6c6c6); padding-top: 1px; padding-left: 9px; }
.sel i { margin: 0 5px 0 auto; border: 5.5px solid transparent; border-top: 8px solid #5a5a5a; border-bottom: 0; }
.objsize { height: 224px; padding-top: 12px; }
.row { display: flex; height: 40px; align-items: center; }
.row.units { margin-top: -2px; }
.ic { width: 30px; flex: none; display: flex; align-items: center; }
.units .ic { padding-left: 3px; }
.ic svg { margin-left: 1px; }
.units .ic svg { margin-left: 0; }
.lb { width: 60px; flex: none; display: flex; flex-direction: column; align-items: flex-start; }
.plain .lb { width: 90px; padding-bottom: 10px; }
.num { width: 67px; height: 20px; flex: none; background: linear-gradient(#cfcfcf, #dedede 60%); border: 1px solid #b5b5b5; border-top-color: #858585; border-left-color: #8f8f8f; border-bottom-color: #f6f6f6; border-radius: 3px; box-shadow: inset 1px 2px 3px #a2a2a2; padding: 3px 0 0 9px; }
.spin { width: 15px; height: 30px; flex: none; margin-left: 3px; border: 1px solid #b9b9b9; border-bottom-color: #999; border-radius: 4px; background: linear-gradient(#f1f1f1, #d0d0d0); display: flex; flex-direction: column; }
.spin i { flex: 1; display: flex; align-items: center; justify-content: center; }
.spin i + i { border-top: 1px solid #8a8a8a; }
.spin i::before { content: ""; border: 3.5px solid transparent; border-bottom: 6px solid #555; border-top: 0; }
.spin i + i::before { border-top: 6px solid #555; border-bottom: 0; }
.radios { display: flex; align-items: center; height: 40px; }
.radio { width: 13px; height: 13px; border-radius: 50%; border: 1px solid #b9b9b9; background: linear-gradient(#f4f4f4, #cfcfcf); margin-right: 6px; }
.radios .sel-on { margin-left: 11px; border: 2px solid #62a9d6; border-bottom-color: #4d6f86; background: radial-gradient(#444 45%, #e6e6e6 50%); }
.constr { height: 70px; padding-top: 13px; }
.constr .sel { margin-top: 13px; }
.dist { height: 265px; padding-top: 5px; }
.method { margin-top: 5px; height: 20px; gap: 20px; }
.method + .row { margin-top: 5px; }
.relief { height: 20px; margin-top: 5px; gap: 14px; }
.closed { height: 40px; display: flex; align-items: center; justify-content: space-between; padding-top: 1px; background: linear-gradient(#fafafa, #eee); }
.closed:last-child { height: 41px; border-bottom: 1px solid #c6c6c6; }
.grey { color: #555; fill: #555; }
.bluefill { color: #1581c8; fill: #1581c8; }

.stage { flex: 1; display: flex; flex-direction: column; background: linear-gradient(90deg, transparent 1405px, #8e98a3 1413px); }
.scene { flex: 1; position: relative; }
.hand { position: absolute; left: 1034px; top: 350px; }
.floorline { position: absolute; left: 1034px; top: 739px; width: 135px; height: 1px; background: linear-gradient(90deg, #4d545d, transparent); }
.nav { position: absolute; left: 1280px; top: 0; }
.matbar { height: 50px; margin-right: 7px; border-top: 1px solid #aaa; border-bottom: 2px solid #a9a9a9; background: linear-gradient(#dfdfdf, #dcdcdc 70%, #cecece); display: flex; align-items: center; padding-left: 246px; box-shadow: inset 1px 1px 2px #bbb; }
.matbar .u { margin: 0 10px; }
.matbar .fl { margin: 0 10px; }
.matbar .num { background: #cecece; }
.matbar .spin { background: linear-gradient(#dedede, #b4b4b4); margin-left: 2.8px; }
.matbar .sel i { border-width: 8px 5px 0; margin-right: 5px; }

.panel { width: 307px; flex: none; border-right: 3px solid #b3bec8; background: repeating-linear-gradient(135deg, #e6eaec 0, #e4e8ea 1.2px, #d5dade 2px, #e4e8ea 2.83px); }
.tabs { display: flex; height: 30px; color: #111; font-size: 12px; width: 307px; }
.tab { width: 165px; height: 29px; display: flex; align-items: center; padding-left: 51px; flex: none; }
.idle { width: 142px; height: 30px; padding: 1px 0 0 33px; color: #4a4a4a; background: linear-gradient(#cfd0d1, #dcddde); border-radius: 0 0 0 6px; border-left: 2px solid #f0f2f3; border-bottom: 2px solid #f0f2f3; box-shadow: inset 3px 0 4px #c2c4c6; }
.counts { display: flex; padding: 39px 0 0 64px; gap: 5px; height: 471px; color: #000; }
.counts > div { width: 80px; display: flex; flex-direction: column; align-items: center; font-size: 12px; }
.counts > div + div { width: 118px; }
.counts strong { font-weight: 400; font-size: 32px; line-height: 36px; margin-top: 1px; }
.sheet { margin-left: 6px; }

.dialog { position: absolute; left: 685px; top: 329px; width: 550px; height: 494px; border: 1px solid #868b92; background: #ebebeb; box-shadow: 0 2px 10px rgba(40, 50, 65, .5); display: flex; flex-direction: column; }
.dialog header { height: 30px; background: #fff; display: flex; align-items: center; padding: 0 9px 0 8px; font: 12px/16px "Open Sans", sans-serif; color: #999; gap: 4px; }
.dialog .x { margin-left: auto; margin-top: -2px; }
.dialog p { margin: 11px 0 0 10px; height: 25px; }
.cols { display: flex; gap: 10px; padding-left: 10px; }
.inset { width: 258px; height: 373px; margin: 0; background: #e1e1e1; border: 1px solid #adadad; border-top: 1px solid #6c6c68; box-shadow: inset 0 3px 5px #8f8f8f, inset 2px 0 3px #bdbdbd, inset -1px 0 3px #bdbdbd; }
.list { list-style: none; padding: 6px 1px 0 4px; }
.list li { height: 16px; display: flex; align-items: center; padding-left: 3px; }
.list .hot { background: #777; color: #000; }
.form { color: #828282; padding-top: 4px; }
.frow { height: 40px; display: flex; align-items: center; padding-left: 30px; }
.form h3 { margin: 0; height: 20px; padding: 1px 0 0 19px; font: inherit; }
.fi { width: 29px; flex: none; }
.fi svg { margin-left: -1px; }
.frow.first .fi svg, .bluefill { margin-left: 0 !important; }
.form .fl { width: 100px; padding-bottom: 4px; }
.form .fi { padding-bottom: 7px; }
.frow .sel.dim { margin-left: -20px; margin-top: 2px; }
.dim.sel { border-bottom: 1px solid #a4a4a4; color: #8a8a8a; background: linear-gradient(#e0e0e0, #d2d2d2); border-color: transparent #c5c5c5 #a4a4a4; }
.dim.sel i { border-top-color: #999; }
.dim.num { background: #d2d2d2; border-color: #bababa #c6c6c6 #eee; box-shadow: none; }
.dim.spin { background: linear-gradient(#e2e2e2, #cecece); border-color: #bdbdbd #bdbdbd #a9a9a9; }
.dim.spin i::before { border-bottom-color: #8e8e8e; }
.dim.spin i + i::before { border-top-color: #8e8e8e; }
.dim.spin i + i { border-top-color: #a9a9a9; }
.actions { display: flex; justify-content: space-between; padding: 16px 10px 0 10px; }
.done { width: 40px; height: 20px; }

.taskbar { height: 40px; flex: none; background: linear-gradient(90deg, #060a11, #070b11 640px, #17191c 1000px, #181a1d 1780px, #06090e); display: flex; color: #fff; font: 12px/16px "Open Sans", sans-serif; }
.tk { width: 48px; display: flex; align-items: center; justify-content: center; }
.task { display: flex; align-items: center; border-bottom: 2px solid #76b9ed; padding-left: 7px; height: 40px; }
.task span { margin-top: 1px; }
.chrome { width: 152px; margin-left: 7px; }
.pen { margin: 0 4px 0 7px; }
.folder { width: 152px; margin-left: 9px; padding-left: 8px; gap: 10px; }
.active { width: 160px; margin-left: 5px; background: #3a3d41; padding-left: 10px; gap: 5px; }
.tray { margin-left: auto; width: 283px; display: flex; align-items: center; }
.t2 { margin-left: 3px; }
.deu { margin-left: -12px; }
.clock { width: 54px; margin-left: 13px; display: flex; flex-direction: column; align-items: center; line-height: 18px; }
.note { margin-left: 18px; }
.edge { width: 1px; height: 40px; background: #63666a; margin-left: 20px; }
</style>
